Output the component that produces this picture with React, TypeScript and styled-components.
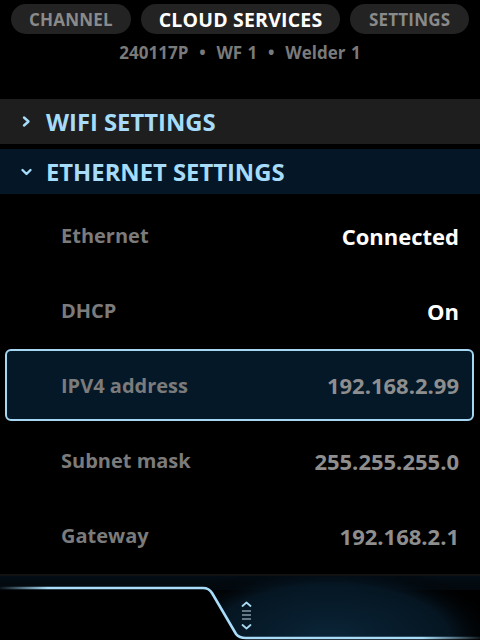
import React from "react";
import styled, { createGlobalStyle } from "styled-components";

const GlobalStyle = createGlobalStyle`
  html, body { margin: 0; padding: 0; background: #000; }
  body { font-family: "Open Sans", "Noto Sans", sans-serif; -webkit-font-smoothing: antialiased; }
  * { box-sizing: border-box; }
`;

const Screen = styled.div`
  width: 480px;
  height: 640px;
  background: #000;
  display: flex;
  flex-direction: column;
  overflow: hidden;
`;

const TabBar = styled.div`
  display: flex;
  gap: 10px;
  padding: 4px 11px 0 11px;
`;

const Tab = styled.div<{ $w: number; $active?: boolean }>`
  width: ${(p) => p.$w}px;
  height: 30px;
  border-radius: 15px;
  background: #232323;
  display: flex;
  align-items: center;
  justify-content: center;
  font-weight: 700;
  font-size: ${(p) => (p.$active ? 19.5 : 17)}px;
  letter-spacing: 0.2px;
  color: ${(p) => (p.$active ? "#ffffff" : "#8a8a8a")};
`;

const Subtitle = styled.div`
  height: 36px;
  display: flex;
  align-items: center;
  justify-content: center;
  font-weight: 700;
  font-size: 17px;
  color: #7a7a7a;
  word-spacing: 1px;
  padding-top: 1px;
`;

const Section = styled.div<{ $open?: boolean }>`
  height: 45px;
  margin-top: ${(p) => (p.$open ? 5 : 29)}px;
  background: ${(p) => (p.$open ? "#051726" : "#1e1e1e")};
  display: flex;
  align-items: center;
  padding-left: 20px;
  gap: 13px;
  color: #a6dcfa;
  font-weight: 700;
  font-size: 23.8px;
`;

const Chevron = styled.svg`
  width: 13px;
  height: 13px;
  flex: none;
`;

const List = styled.div`
  display: flex;
  flex-direction: column;
  padding-top: 4px;
`;

const Row = styled.div<{ $selected?: boolean }>`
  height: ${(p) => (p.$selected ? 72 : 75)}px;
  margin: ${(p) => (p.$selected ? "1px 6px 2px 5px" : "0")};
  padding: ${(p) => (p.$selected ? "0 13px 0 54px" : "0 21px 0 61px")};
  border: ${(p) => (p.$selected ? "2px solid #a5d6f2" : "none")};
  border-radius: 6px;
  background: ${(p) => (p.$selected ? "#051828" : "transparent")};
  display: flex;
  align-items: center;
  justify-content: space-between;
  font-weight: 700;
`;

const Label = styled.span`
  color: #7b7b7b;
  font-size: 20px;
`;

const Value = styled.span<{ $bright?: boolean }>`
  color: ${(p) => (p.$bright ? "#ffffff" : "#8e8e8e")};
  font-size: 22px;
`;

const Footer = styled.div`
  margin-top: auto;
  height: 66px;
  border-top: 2px solid #121212;
`;

const FooterArt = styled.svg`
  display: block;
  width: 480px;
  height: 64px;
`;

const rows = [
  { label: "Ethernet", value: "Connected", bright: true },
  { label: "DHCP", value: "On", bright: true },
  { label: "IPV4 address", value: "192.168.2.99", selected: true },
  { label: "Subnet mask", value: "255.255.255.0" },
  { label: "Gateway", value: "192.168.2.1" },
];

export default function App() {
  return (
    <Screen>
      <GlobalStyle />
      <TabBar>
        <Tab $w={120}>CHANNEL</Tab>
        <Tab $w={200} $active>
          CLOUD SERVICES
        </Tab>
        <Tab $w={119}>SETTINGS</Tab>
      </TabBar>
      <Subtitle>240117P&nbsp;&nbsp;•&nbsp;&nbsp;WF 1&nbsp;&nbsp;•&nbsp;&nbsp;Welder 1</Subtitle>

      <Section>
        <Chevron viewBox="0 0 13 13">
          <path d="M4 2.5 L8.5 6.5 L4 10.5" fill="none" stroke="#a6dcfa" strokeWidth="2.4" strokeLinecap="round" strokeLinejoin="round" />
        </Chevron>
        WIFI SETTINGS
      </Section>
      <Section $open>
        <Chevron viewBox="0 0 13 13">
          <path d="M2.5 5 L6.5 9 L10.5 5" fill="none" stroke="#a6dcfa" strokeWidth="2.4" strokeLinecap="round" strokeLinejoin="round" />
        </Chevron>
        ETHERNET SETTINGS
      </Section>

      <List>
        {rows.map((r) => (
          <Row key={r.label} $selected={r.selected}>
            <Label>{r.label}</Label>
            <Value $bright={r.bright}>{r.value}</Value>
          </Row>
        ))}
      </List>

      <Footer>
        <FooterArt viewBox="0 0 480 64">
          <defs>
            <linearGradient id="lineGrad" x1="0" y1="0" x2="480" y2="0" gradientUnits="userSpaceOnUse">
              <stop offset="0" stopColor="#a8dcf8" stopOpacity="0.05" />
              <stop offset="0.1" stopColor="#a8dcf8" stopOpacity="1" />
              <stop offset="0.88" stopColor="#a8dcf8" stopOpacity="1" />
              <stop offset="1" stopColor="#a8dcf8" stopOpacity="0.1" />
            </linearGradient>
            <radialGradient id="fillGrad" cx="330" cy="62" r="170" gradientUnits="userSpaceOnUse" gradientTransform="translate(330 62) scale(1 0.45) translate(-330 -62)">
              <stop offset="0" stopColor="#0a2538" stopOpacity="1" />
              <stop offset="0.7" stopColor="#061826" stopOpacity="0.9" />
              <stop offset="1" stopColor="#000000" stopOpacity="0" />
            </radialGradient>
            <linearGradient id="topFade" x1="0" y1="0" x2="0" y2="64" gradientUnits="userSpaceOnUse">
              <stop offset="0" stopColor="#04101a" stopOpacity="0.8" />
              <stop offset="1" stopColor="#000" stopOpacity="0" />
            </linearGradient>
          </defs>
          <rect x="0" y="0" width="480" height="14" fill="url(#topFade)" />
          <path d="M203 12 Q209 12 212 17 L236 58 Q239 62 246 62 H480 V0 H203 Z" fill="url(#fillGrad)" />
          <path
            d="M0 12 H203 Q209 12 212 17 L236 58 Q239 62 246 62 H480"
            fill="none"
            stroke="url(#lineGrad)"
            strokeWidth="2.6"
          />
          <path d="M242.5 30 L246.5 26.5 L250.5 30" fill="none" stroke="#a8d8f2" strokeWidth="1.8" strokeLinecap="round" strokeLinejoin="round" />
          <path d="M242 35 H251 M242 39 H251 M242 43 H251" stroke="#8796a2" strokeWidth="1.6" />
          <path d="M242.5 49 L246.5 52.5 L250.5 49" fill="none" stroke="#a8d8f2" strokeWidth="1.8" strokeLinecap="round" strokeLinejoin="round" />
        </FooterArt>
      </Footer>
    </Screen>
  );
}
